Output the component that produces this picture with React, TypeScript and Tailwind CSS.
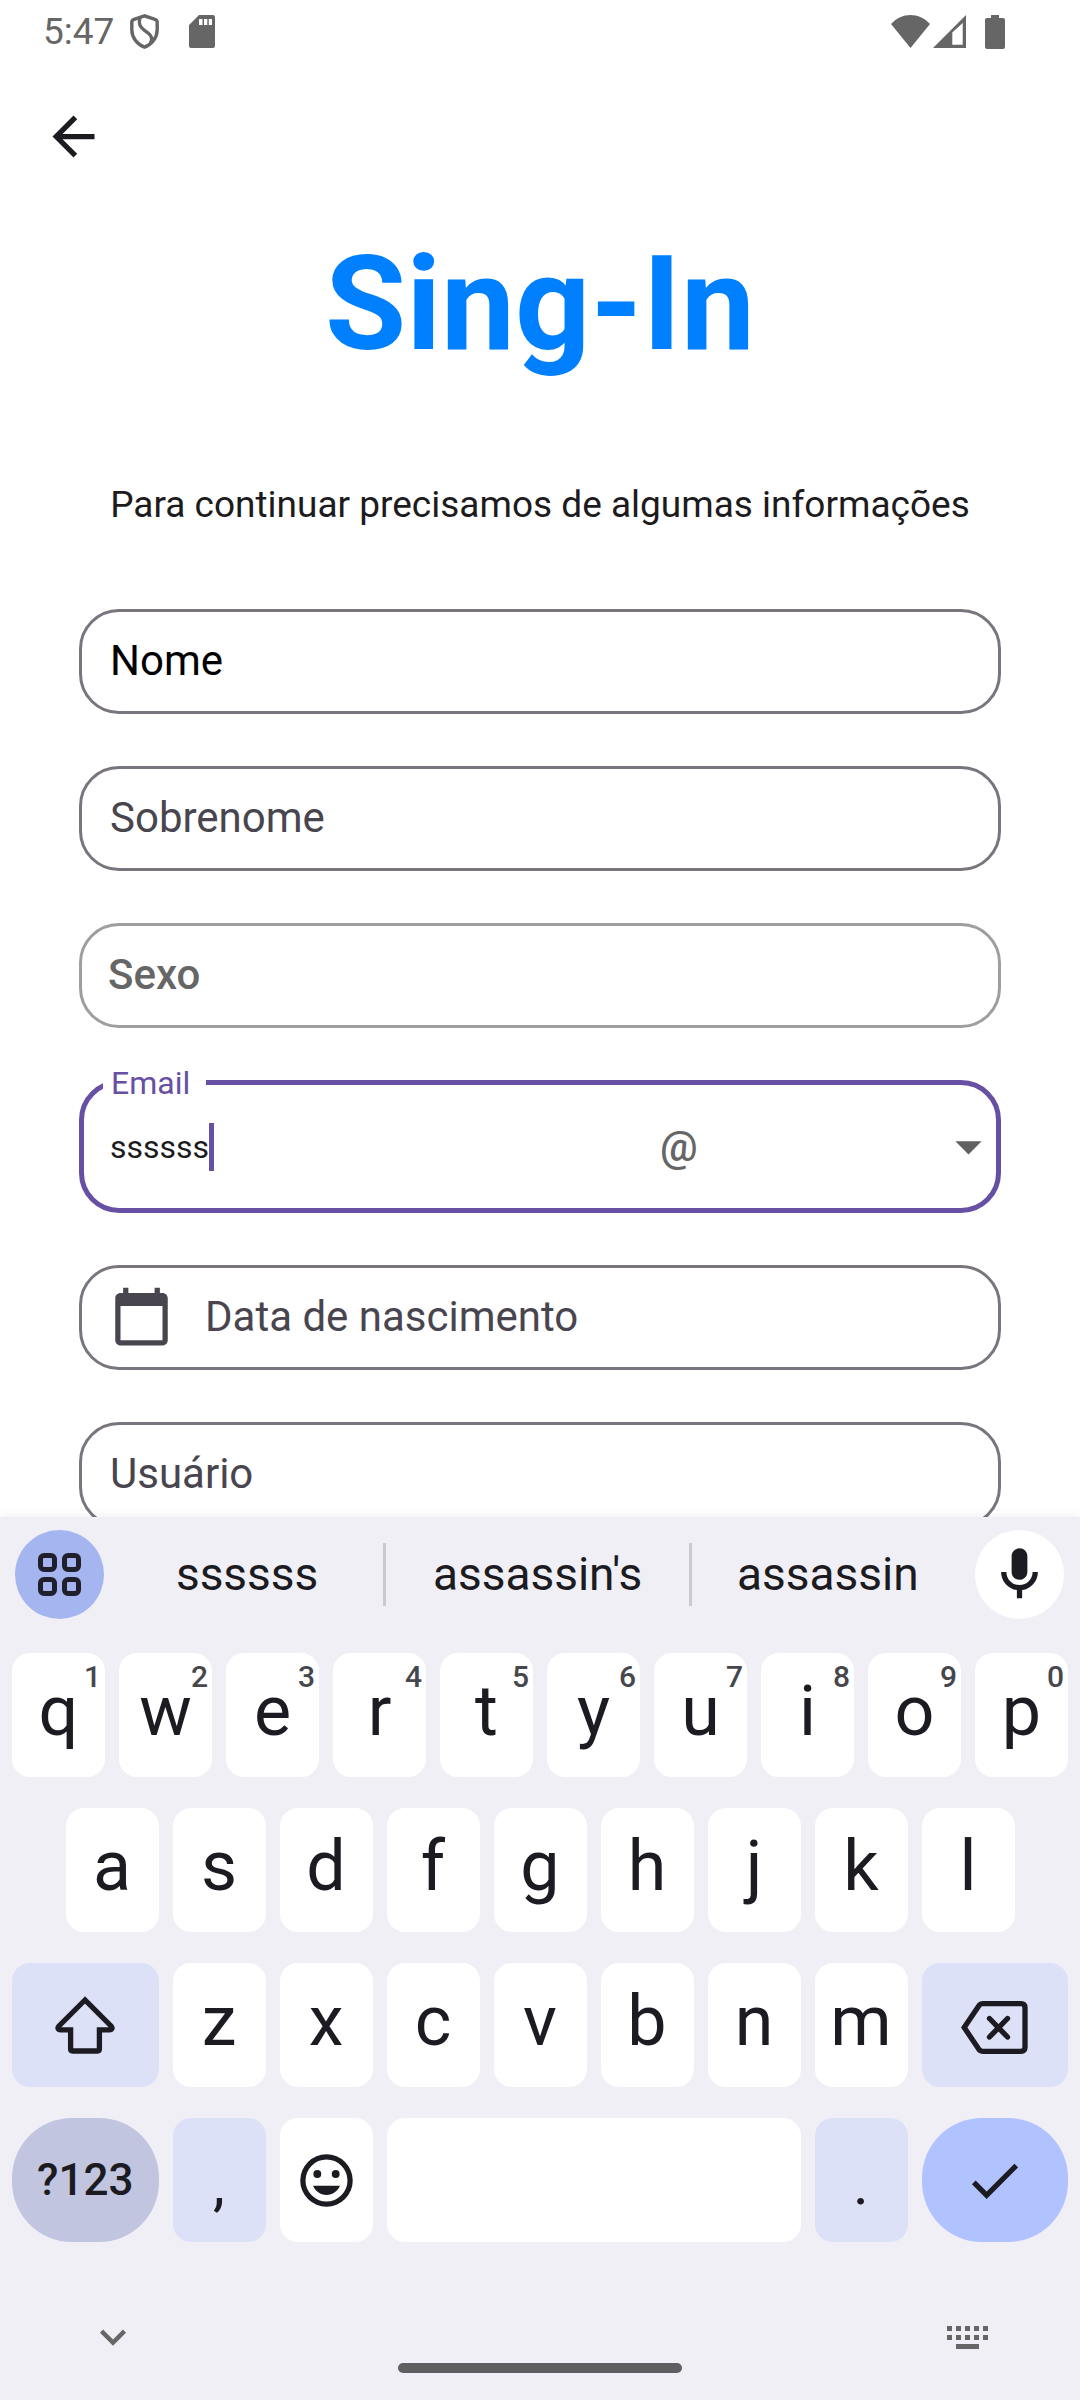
import type { ReactNode } from 'react';

const fieldBox = 'flex h-[105px] w-full items-center rounded-[40px] border-3 pr-7 pb-0.5';
const outlined = 'border-[#79747e]';

function StatusBar() {
  return (
    <header className="flex h-[63px] shrink-0 items-center justify-between pr-[75px] pl-[43px] text-[#666666]">
      <div className="flex items-center">
        <time className="text-[37px] leading-10">5:47</time>
        <svg className="ml-4 h-[35px] w-[29px]" viewBox="0 0 29 35" fill="none" stroke="currentColor" strokeWidth="3.4" aria-hidden="true">
          <path d="M14.5 1.8 4 5.3Q1.8 6 1.8 8.2V15.5C1.8 23.5 7 30.5 14.5 33.2 22 30.5 27.2 23.5 27.2 15.5V8.2Q27.2 6 25 5.3Z" />
          <path d="M9.8 3.5C8.5 10.5 10 12.8 14 16 19 19.5 24.5 23 20 29.5" />
        </svg>
        <svg className="ml-[30px] h-[33px] w-[26px]" viewBox="0 0 26 33" fill="currentColor" fillRule="evenodd" aria-hidden="true">
          <path d="M10 0H24Q26 0 26 2V31Q26 33 24 33H2Q0 33 0 31V10ZM10 4V10H13.5V4ZM15 4V10H18.3V4ZM19.8 4V10H23V4Z" />
        </svg>
      </div>
      <div className="flex items-center">
        <svg className="h-[33px] w-[39px]" viewBox="0 0 39 33" fill="currentColor" aria-hidden="true">
          <path d="M19.5 33 0 9C11-3 28-3 39 9Z" />
        </svg>
        <svg className="ml-[3px] h-[33px] w-[33px]" viewBox="0 0 33 33" fill="currentColor" fillRule="evenodd" aria-hidden="true">
          <path d="M0 33 33 0V33ZM19.3 29.7V17.5L29.7 8V29.7Z" />
        </svg>
        <svg className="ml-[19px] h-[34px] w-5" viewBox="0 0 20 34" fill="currentColor" aria-hidden="true">
          <path d="M6 0H14V3H18Q20 3 20 5V32Q20 34 18 34H2Q0 34 0 32V5Q0 3 2 3H6Z" />
        </svg>
      </div>
    </header>
  );
}

function Material({ d, className = 'size-[63px]' }: { d: string; className?: string }) {
  return (
    <svg viewBox="0 0 24 24" fill="currentColor" className={className} aria-hidden="true">
      <path d={d} />
    </svg>
  );
}

function TextField({ label, icon, dark = false }: { label: string; icon?: ReactNode; dark?: boolean }) {
  return (
    <div className={`${fieldBox} ${outlined} shrink-0 gap-8 pl-7 text-[#49454f]`}>
      {icon}
      <input
        type="text"
        aria-label={label}
        placeholder={label}
        className={
          dark
            ? 'min-w-0 flex-1 bg-transparent text-[42px] leading-[63px] text-black outline-none placeholder:text-black'
            : 'min-w-0 flex-1 bg-transparent text-[42px] leading-[63px] text-black outline-none placeholder:text-[#49454f]'
        }
      />
    </div>
  );
}

function EmailField() {
  return (
    <div className="relative flex h-[133px] w-full shrink-0 items-center rounded-[40px] border-5 border-[#6750a4] pr-2 pl-[26px]">
      <label
        htmlFor="email"
        className="absolute -top-[21px] left-[19px] bg-white pr-4 pl-2 text-[32px] leading-[38px] text-[#6750a4]"
      >
        Email
      </label>
      <div className="flex flex-1 items-center">
        <input
          id="email"
          type="text"
          defaultValue="ssssss"
          className="[field-sizing:content] bg-transparent text-[32px] leading-12 text-[#1d1b20] caret-transparent outline-none"
        />
        <span className="h-12 w-[5px] bg-[#6750a4]" />
      </div>
      <div className="relative flex w-[328px] items-center">
        <select
          aria-label="@"
          className="w-full appearance-none bg-transparent text-[42px] leading-[63px] font-medium text-[#666666] outline-none"
        >
          <option>@</option>
        </select>
        <Material d="M7 10l5 5 5-5z" className="pointer-events-none absolute -right-3 size-[63px] text-[#616161]" />
      </div>
    </div>
  );
}

const keyBase = 'relative mx-[7px] flex h-[124px] items-center justify-center text-[#1b1b21]';

function Letter({ char, hint, first = false }: { char: string; hint?: string; first?: boolean }) {
  return (
    <button
      type="button"
      className={`${keyBase} rounded-[18px] bg-white pb-2 text-[70px] leading-[80px] ${first ? 'col-span-2 col-start-2' : 'col-span-2'}`}
    >
      {char}
      {hint && <span className="absolute top-1.5 right-1 text-[30px] leading-9 font-medium text-[#46474c]">{hint}</span>}
    </button>
  );
}

const suggestion = 'text-center text-[46px] leading-[63px]';

function Keyboard() {
  return (
    <section aria-label="Teclado" className="z-10 flex shrink-0 flex-col bg-[#f0eff6] text-[#1b1b21] shadow-[0_0_10px_rgba(0,0,0,0.08)]">
      <div className="flex items-center pt-[13px] pr-4 pl-[15px]">
        <button type="button" aria-label="Menu" className="flex size-[89px] items-center justify-center rounded-full bg-[#a5b5ef]">
          <svg className="size-[43px]" viewBox="0 0 43 43" fill="none" stroke="#1f202c" strokeWidth="5" aria-hidden="true">
            <rect x="2.5" y="2.5" width="14" height="14" rx="3.5" />
            <rect x="26.5" y="2.5" width="14" height="14" rx="3.5" />
            <rect x="2.5" y="26.5" width="14" height="14" rx="3.5" />
            <rect x="26.5" y="26.5" width="14" height="14" rx="3.5" />
          </svg>
        </button>
        <div className="mr-[11px] ml-[7px] flex flex-1 items-center">
          <button type="button" className={`${suggestion} flex-[9]`}>ssssss</button>
          <span className="h-[63px] w-[3px] bg-[#cbcad0]" />
          <button type="button" className={`${suggestion} flex-[10]`}>assassin&apos;s</button>
          <span className="h-[63px] w-[3px] bg-[#cbcad0]" />
          <button type="button" className={`${suggestion} flex-[9]`}>assassin</button>
        </div>
        <button type="button" aria-label="Voz" className="flex size-[89px] items-center justify-center rounded-full bg-white">
          <Material d="M12 14c1.66 0 3-1.34 3-3V5c0-1.66-1.34-3-3-3S9 3.34 9 5v6c0 1.66 1.34 3 3 3zM17 11c0 2.76-2.24 5-5 5s-5-2.24-5-5H5c0 3.53 2.61 6.43 6 6.92V21h2v-3.08c3.39-.49 6-3.39 6-6.92h-2z" />
        </button>
      </div>

      <div className="mt-[34px] grid grid-cols-20 gap-y-[31px] px-[5px]">
        {[...'qwertyuiop'].map((c, i) => (
          <Letter key={c} char={c} hint={String((i + 1) % 10)} />
        ))}

        {[...'asdfghjkl'].map((c, i) => (
          <Letter key={c} char={c} first={i === 0} />
        ))}

        <button type="button" aria-label="Shift" className={`${keyBase} col-span-3 col-start-1 rounded-[18px] bg-[#dde1f8]`}>
          <svg className="h-[58px] w-[60px]" viewBox="0 0 60 58" fill="none" stroke="currentColor" strokeWidth="5.3" aria-hidden="true">
            <path d="M30 4 4 30Q2.5 31.8 3.2 32.8 3.8 33.8 5.5 33.8H15.6V53Q15.6 55 17.6 55H42.4Q44.4 55 44.4 53V33.8H54.5Q56.2 33.8 56.8 32.8 57.5 31.8 56 30Z" />
          </svg>
        </button>
        {[...'zxcvbnm'].map((c) => (
          <Letter key={c} char={c} />
        ))}
        <button type="button" aria-label="Apagar" className={`${keyBase} col-span-3 rounded-[18px] bg-[#dde1f8] pt-1`}>
          <svg className="h-[53px] w-[67px]" viewBox="0 0 67 53" fill="none" stroke="currentColor" strokeWidth="5.3" aria-hidden="true">
            <path d="M3.2 26.5 18 4.5Q19.4 2.7 21.5 2.7H60Q64 2.7 64 6.7V46.3Q64 50.3 60 50.3H21.5Q19.4 50.3 18 48.5Z" />
            <path d="M28.5 17.5 46.5 36M46.5 17.5 28.5 36" strokeLinecap="round" />
          </svg>
        </button>

        <button type="button" className={`${keyBase} col-span-3 col-start-1 rounded-[60px] bg-[#c1c5df] text-[44px] leading-[60px] font-medium`}>
          ?123
        </button>
        <button type="button" className={`${keyBase} col-span-2 rounded-[18px] bg-[#dde1f8] pt-2 text-[60px] leading-[80px]`}>,</button>
        <button type="button" aria-label="Emoji" className={`${keyBase} col-span-2 rounded-[18px] bg-white`}>
          <Material d="M12 2a10 10 0 1 0 0 20a10 10 0 1 0 0-20zM12 20a8 8 0 1 1 0-16a8 8 0 1 1 0 16zM8.5 8a1.5 1.5 0 1 0 0 3a1.5 1.5 0 1 0 0-3zM15.5 8a1.5 1.5 0 1 0 0 3a1.5 1.5 0 1 0 0-3zM12 17.5c2.33 0 4.31-1.46 5.11-3.5H6.89c.8 2.04 2.78 3.5 5.11 3.5z" />
        </button>
        <button type="button" aria-label="Espaço" className={`${keyBase} col-span-8 rounded-[18px] bg-white`} />
        <button type="button" className={`${keyBase} col-span-2 rounded-[18px] bg-[#dde1f8] pt-2 text-[60px] leading-[80px]`}>.</button>
        <button type="button" aria-label="Concluir" className={`${keyBase} col-span-3 rounded-[60px] bg-[#b1c3ff]`}>
          <Material d="M9 16.17L4.83 12l-1.42 1.41L9 19 21 7l-1.41-1.41z" />
        </button>
      </div>

      <nav className="mt-[69px] flex h-[52px] items-center justify-between pr-[92px] pl-[87px] text-[#666666]">
        <button type="button" aria-label="Fechar teclado">
          <Material d="M16.59 8.59L12 13.17 7.41 8.59 6 10l6 6 6-6z" className="size-[52px]" />
        </button>
        <button type="button" aria-label="Trocar teclado">
          <svg className="h-[23px] w-[41px]" viewBox="0 0 41 23" fill="currentColor" aria-hidden="true">
            {[0, 9, 18, 27, 36].map((x) => (
              <path key={x} d={`M${x} 0h5v5h-5zM${x} 9h5v5h-5z`} />
            ))}
            <path d="M9 18h23v5H9z" />
          </svg>
        </button>
      </nav>
      <div className="mb-[27px] h-2.5 w-[284px] self-center rounded-full bg-[#5f5f61]" />
    </section>
  );
}

export default function App() {
  return (
    <div className="flex h-screen flex-col overflow-hidden bg-white font-[Roboto,sans-serif]">
      <StatusBar />
      <main className="flex min-h-0 flex-1 flex-col overflow-hidden">
        <button type="button" aria-label="Voltar" className="mt-[42px] ml-[42px] size-[63px] shrink-0 text-[#1d1b20]">
          <Material d="M20 11H7.83l5.59-5.59L12 4l-8 8 8 8 1.41-1.41L7.83 13H20v-2z" />
        </button>
        <h1 className="mt-[59px] text-center text-[132px] leading-[154px] font-bold text-[#0080ff]">Sing-In</h1>
        <p className="mt-[98px] text-center text-[37px] leading-[52px] text-[#1d1b20]">
          Para continuar precisamos de algumas informações
        </p>
        <form className="mt-[78px] flex flex-col gap-[52px] px-[79px]">
          <TextField label="Nome" dark />
          <TextField label="Sobrenome" />
          <div className={`${fieldBox} shrink-0 border-[#9e9e9e] pl-[26px]`}>
            <select
              aria-label="Sexo"
              className="w-full appearance-none bg-transparent text-[42px] leading-[63px] font-medium text-[#666666] outline-none"
            >
              <option>Sexo</option>
            </select>
          </div>
          <EmailField />
          <TextField
            label="Data de nascimento"
            icon={
              <Material d="M20 3h-1V1h-2v2H7V1H5v2H4c-1.1 0-2 .9-2 2v16c0 1.1.9 2 2 2h16c1.1 0 2-.9 2-2V5c0-1.1-.9-2-2-2zm0 18H4V8h16v13z" />
            }
          />
          <TextField label="Usuário" />
        </form>
      </main>
      <Keyboard />
    </div>
  );
}
